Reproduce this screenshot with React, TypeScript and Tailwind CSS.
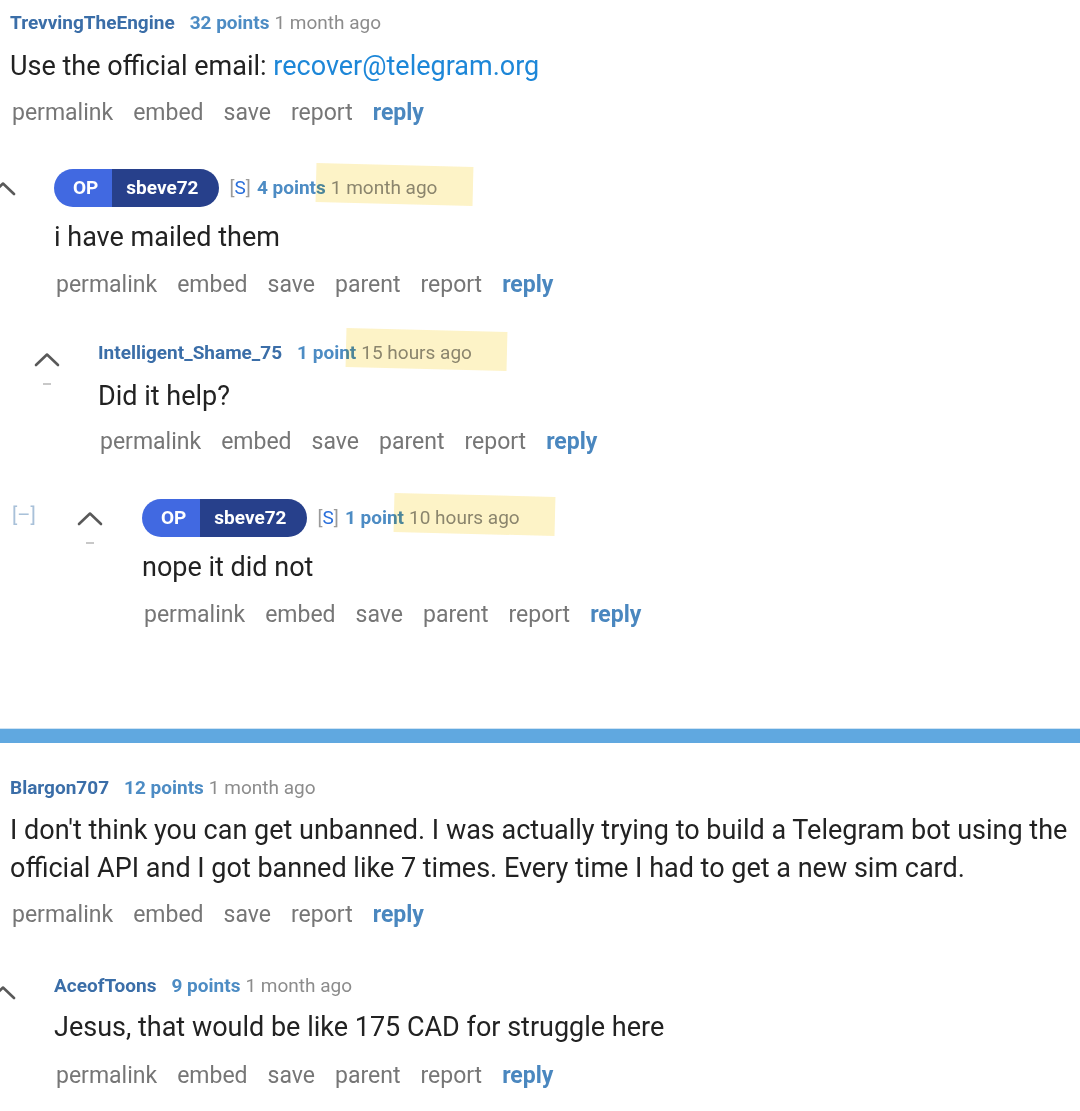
import React from "react";

const Chevron: React.FC<{ dash?: boolean }> = ({ dash }) => (
  <div className="flex flex-col items-center">
    <svg width="26" height="15" viewBox="0 0 26 15" fill="none">
      <path d="M2 13 L13 2.5 L24 13" stroke="#595959" strokeWidth="2.6" strokeLinecap="round" strokeLinejoin="round" />
    </svg>
    {dash && <div className="mt-[16px] h-[2px] w-[8px] bg-[#c8c8c8]" />}
  </div>
);

const User: React.FC<{ name: string }> = ({ name }) => (
  <span className="font-bold text-[#3b6ea8] mr-[15px]">{name}</span>
);

const Points: React.FC<{ text: string }> = ({ text }) => (
  <span className="font-bold text-[#4d8cc4]">{text}</span>
);

const Time: React.FC<{ text: string; highlight?: boolean }> = ({ text, highlight }) => (
  <span className="relative ml-[5px] text-[#8c8c8c]">
    {text}
    {highlight && (
      <span className="absolute -left-[15px] -right-[35px] -top-[9px] -bottom-[1px] bg-[#fdefb4] mix-blend-multiply rotate-[1.4deg] opacity-75" />
    )}
  </span>
);

const OpBadge: React.FC<{ name: string }> = ({ name }) => (
  <span className="flex h-[38px] overflow-hidden rounded-full text-[19px] font-bold text-white mr-[11px]">
    <span className="flex items-center bg-[#4169e1] pl-[19px] pr-[14px]">OP</span>
    <span className="flex items-center bg-[#27408b] pl-[14px] pr-[20px]">{name}</span>
  </span>
);

const Submitter: React.FC = () => (
  <span className="text-[#9a9a9a] mr-[6px]">
    [<span className="text-[#2a6fdb]">S</span>]
  </span>
);

const Actions: React.FC<{ parent?: boolean; className?: string }> = ({ parent, className }) => {
  const items = ["permalink", "embed", "save", ...(parent ? ["parent"] : []), "report"];
  return (
    <div className={`flex items-center gap-[20px] pl-[2px] h-[30px] text-[23px] text-[#767676] ${className ?? ""}`}>
      {items.map((i) => (
        <span key={i}>{i}</span>
      ))}
      <span className="font-bold text-[#4a87bf]">reply</span>
    </div>
  );
};

const Meta: React.FC<{ children: React.ReactNode }> = ({ children }) => (
  <div className="flex items-center h-[38px] text-[19px] whitespace-nowrap">{children}</div>
);

const Body: React.FC<{ children: React.ReactNode; className?: string }> = ({ children, className }) => (
  <p className={`text-[27px] leading-[38px] text-[#222222] ${className ?? ""}`}>{children}</p>
);

export default function App() {
  return (
    <div className="w-full h-[1111px] overflow-hidden bg-white font-['Roboto',sans-serif]">
      {/* top comment */}
      <div className="pt-[4px] pl-[10px]">
        <Meta>
          <User name="TrevvingTheEngine" />
          <Points text="32 points" />
          <Time text="1 month ago" />
        </Meta>
        <Body className="mt-[5px]">
          Use the official email: <span className="text-[#1d87d8]">recover@telegram.org</span>
        </Body>
        <Actions className="mt-[13px]" />
      </div>

      {/* child A */}
      <div className="mt-[41px] -ml-[10px] flex">
        <div className="w-[26px] mr-[38px] pt-[12px]">
          <Chevron />
        </div>
        <div>
          <Meta>
            <OpBadge name="sbeve72" />
            <Submitter />
            <Points text="4 points" />
            <Time text="1 month ago" highlight />
          </Meta>
          <Body className="mt-[11px]">i have mailed them</Body>
          <Actions parent className="mt-[14px]" />
        </div>
      </div>

      {/* child B */}
      <div className="mt-[34px] pl-[34px] flex">
        <div className="w-[26px] mr-[38px] pt-[18px]">
          <Chevron dash />
        </div>
        <div>
          <Meta>
            <User name="Intelligent_Shame_75" />
            <Points text="1 point" />
            <Time text="15 hours ago" highlight />
          </Meta>
          <Body className="mt-[5px]">Did it help?</Body>
          <Actions parent className="mt-[12px]" />
        </div>
      </div>

      {/* child C */}
      <div className="mt-[42px] pl-[12px] flex">
        <span className="w-[65px] pt-[1px] text-[20px] text-[#a9c1d9]">[–]</span>
        <div className="w-[26px] mr-[39px] pt-[12px]">
          <Chevron dash />
        </div>
        <div>
          <Meta>
            <OpBadge name="sbeve72" />
            <Submitter />
            <Points text="1 point" />
            <Time text="10 hours ago" highlight />
          </Meta>
          <Body className="mt-[11px]">nope it did not</Body>
          <Actions parent className="mt-[14px]" />
        </div>
      </div>

      {/* divider */}
      <div className="mt-[98px] h-[15px] bg-[#60a8e0] border-t border-[#cfe3f3]" />

      {/* second top comment */}
      <div className="mt-[26px] pl-[10px]">
        <Meta>
          <User name="Blargon707" />
          <Points text="12 points" />
          <Time text="1 month ago" />
        </Meta>
        <Body className="mt-[4px] -mr-[14px]">
          I don't think you can get unbanned. I was actually trying to build a Telegram bot using the official API
          and I got banned like 7 times. Every time I had to get a new sim card.
        </Body>
        <Actions className="mt-[13px]" />
      </div>

      {/* child D */}
      <div className="mt-[37px] -ml-[10px] flex">
        <div className="w-[26px] mr-[38px] pt-[18px]">
          <Chevron />
        </div>
        <div>
          <Meta>
            <User name="AceofToons" />
            <Points text="9 points" />
            <Time text="1 month ago" />
          </Meta>
          <Body className="mt-[3px]">Jesus, that would be like 175 CAD for struggle here</Body>
          <Actions parent className="mt-[15px]" />
        </div>
      </div>
    </div>
  );
}
